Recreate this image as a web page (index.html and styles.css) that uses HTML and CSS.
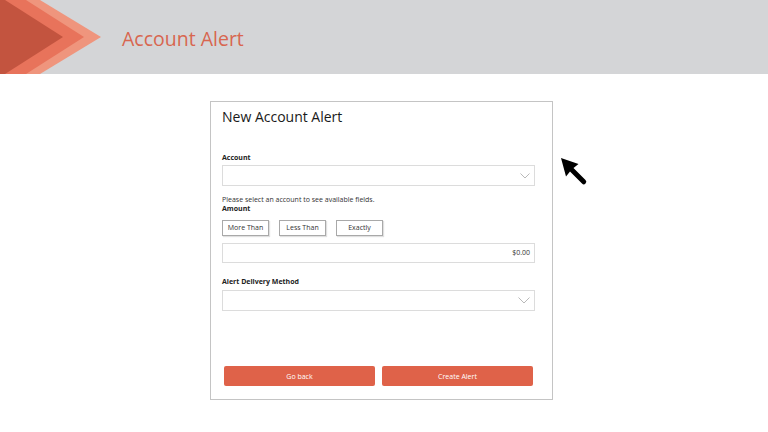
FILE: index.html
```html
<!DOCTYPE html>
<html lang="en">
<head>
<meta charset="utf-8">
<title>Account Alert</title>
<link rel="stylesheet" href="styles.css">
</head>
<body>
<header class="banner">
  <svg class="chevrons" width="104" height="74" viewBox="0 0 104 74" aria-hidden="true">
    <polygon points="0,0 40,0 101,37 40,74 0,74" fill="#ef957d"/>
    <polygon points="0,0 26,0 84,37 26,74 0,74" fill="#e8735b"/>
    <polygon points="0,0 5,0 63,37 5,74 0,74" fill="#c3543f"/>
  </svg>
  <h1 class="banner-title">Account Alert</h1>
</header>

<main class="page">
  <section class="card">
    <h2 class="card-title">New Account Alert</h2>

    <label class="field-label label-account">Account</label>
    <div class="select">
      <svg class="chev" width="10" height="6" viewBox="0 0 10 6"><polyline points="0.5,0.5 5,5 9.5,0.5" fill="none" stroke="#b9b9b9" stroke-width="1"/></svg>
    </div>

    <p class="helper">Please select an account to see available fields.</p>
    <label class="field-label label-amount">Amount</label>

    <div class="toggle-row">
      <button class="toggle">More Than</button>
      <button class="toggle">Less Than</button>
      <button class="toggle">Exactly</button>
    </div>

    <div class="amount-input">$0.00</div>

    <label class="field-label label-delivery">Alert Delivery Method</label>
    <div class="select">
      <svg class="chev" width="12" height="7" viewBox="0 0 12 7"><polyline points="0.5,0.5 6,6 11.5,0.5" fill="none" stroke="#b9b9b9" stroke-width="1"/></svg>
    </div>

    <div class="actions">
      <button class="action">Go back</button>
      <button class="action">Create Alert</button>
    </div>
  </section>

  <svg class="cursor" width="32" height="32" viewBox="0 0 32 32" aria-hidden="true">
    <path d="M3 3 L20.5 9 L15.5 13 L27.5 25 A2.47 2.47 0 0 1 24 28.5 L12 16.5 L8 21.5 Z" fill="#000"/>
  </svg>
</main>
</body>
</html>
```

FILE: styles.css
```css
* { box-sizing: border-box; }

html, body {
  margin: 0;
  padding: 0;
  background: #ffffff;
  font-family: "Open Sans", "Noto Sans", "Liberation Sans", sans-serif;
  color: #1e1e1e;
}

.banner {
  height: 74px;
  background: #d4d5d7;
  display: flex;
  align-items: center;
}

.chevrons {
  display: block;
  flex: none;
}

.banner-title {
  margin: 0 0 0 18px;
  font-size: 19.5px;
  font-weight: 400;
  color: #d8664f;
  line-height: 24px;
  padding-top: 3px;
}

.page {
  position: relative;
  padding-top: 27px;
}

.card {
  margin: 0 0 0 210px;
  width: 343px;
  height: 299px;
  border: 1px solid #c4c4c4;
  padding: 5px 17px 13px 11px;
  display: flex;
  flex-direction: column;
}

.card-title {
  margin: 0;
  font-size: 14px;
  font-weight: 400;
  line-height: 20px;
  color: #1a1a1a;
}

.field-label {
  display: block;
  font-size: 7px;
  font-weight: 700;
  line-height: 10px;
  color: #222;
}

.label-account { margin-top: 26px; }
.label-amount { line-height: 9px; }
.label-delivery { margin-top: 13.5px; }

.select {
  margin-top: 2px;
  height: 21px;
  border: 1px solid #dcdcdc;
  display: flex;
  align-items: center;
  justify-content: flex-end;
  padding-right: 4px;
}

.label-delivery + .select { margin-top: 3px; }

.chev { display: block; }

.helper {
  margin: 9px 0 0 0;
  font-size: 7px;
  line-height: 9px;
  color: #333;
}

.toggle-row {
  margin-top: 7px;
  display: flex;
  gap: 10px;
}

.toggle {
  width: 47px;
  height: 16px;
  padding: 0;
  background: #fff;
  border: 1px solid #a9a9a9;
  box-shadow: 1px 1px 1px rgba(0,0,0,0.12);
  font-family: inherit;
  font-size: 7px;
  color: #333;
  line-height: 14px;
}

.amount-input {
  margin-top: 6.5px;
  height: 20.5px;
  border: 1px solid #dcdcdc;
  display: flex;
  align-items: center;
  justify-content: flex-end;
  padding-right: 4px;
  font-size: 7px;
  color: #333;
}

.actions {
  margin: auto 2px 0 2px;
  display: flex;
  gap: 7px;
}

.action {
  flex: 1;
  height: 20px;
  padding: 0;
  border: none;
  border-radius: 2px;
  background: #df6249;
  color: #fff;
  font-family: inherit;
  font-size: 7px;
}

.cursor {
  position: absolute;
  left: 558px;
  top: 81px;
}
```
